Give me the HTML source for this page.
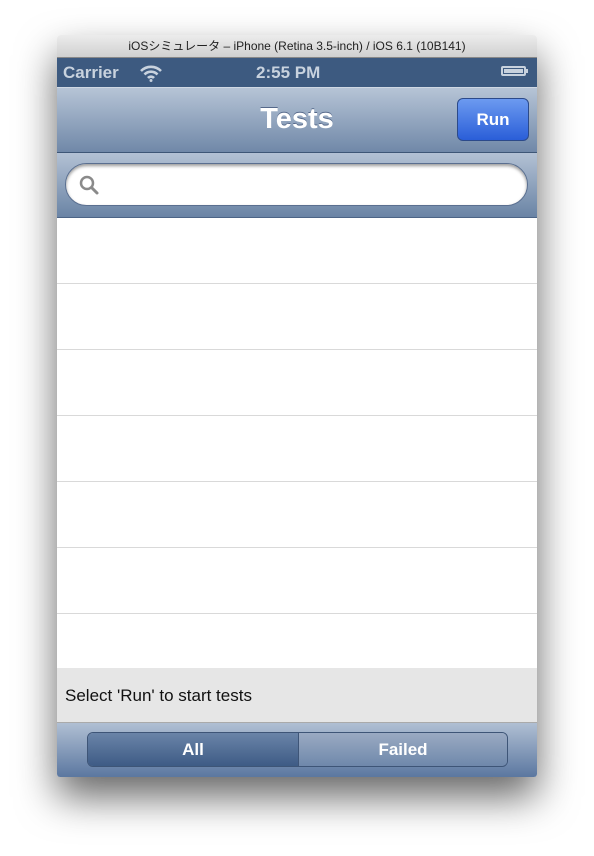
<!DOCTYPE html><html><head><style>
body{margin:0;width:594px;height:856px;background:#fff;position:relative;font-family:"Liberation Sans",sans-serif;overflow:hidden}
.win{position:absolute;left:57px;top:35px;width:480px;height:742px;box-shadow:0 20px 40px rgba(0,0,0,.6);border-radius:4px 4px 3px 3px;overflow:hidden;background:#fff}
.t{height:22px;background:linear-gradient(#ececec,#d0d0d0);font-size:12px;text-align:center;line-height:22px;color:#222;font-family:"Liberation Sans","Noto Sans CJK JP",sans-serif;border-bottom:1px solid #888}
.sb{height:29px;background:#3d5a80;color:#c8d2de;font-weight:bold;font-size:17px;position:relative}
.nav{height:64px;background:linear-gradient(#b6c4d6,#7088a8);border-top:1px solid #cfd8e4;border-bottom:1px solid #3e5676;position:relative}
.srch{height:64px;background:linear-gradient(#b3c1d4,#6a84a5);position:relative;border-bottom:1px solid #4c6486}
.row{height:65px;border-bottom:1px solid #d9d9d9}
</style></head><body>
<div class="win">
<div class="t">iOSシミュレータ – iPhone (Retina 3.5-inch) / iOS 6.1 (10B141)</div>
<div class="sb"><span style="position:absolute;left:6px;top:5px">Carrier</span>
<svg style="position:absolute;left:82px;top:6px" width="24" height="18" viewBox="0 0 24 18"><path d="M2 7a14 14 0 0 1 20 0M5.5 10.5a9 9 0 0 1 13 0M9 14a4 4 0 0 1 6 0" stroke="#c8d2de" stroke-width="2.6" fill="none"/><circle cx="12" cy="16.5" r="1.5" fill="#c8d2de"/></svg>
<span style="position:absolute;left:199px;top:5px">2:55 PM</span>
<div style="position:absolute;left:444px;top:8px;width:25px;height:10px;border:2px solid #c8d2de;border-radius:2px;box-sizing:border-box;padding:1px"><div style="background:#c8d2de;height:100%"></div></div><div style="position:absolute;left:469px;top:11px;width:2px;height:4px;background:#c8d2de"></div></div>
<div class="nav"><div style="position:absolute;left:0;right:0;top:15px;text-align:center;color:#fff;font-weight:bold;font-size:29px;text-shadow:0 -1px 0 #55688a">Tests</div>
<div style="position:absolute;left:400px;top:10px;width:72px;height:43px;border-radius:6px;background:linear-gradient(#6c9af0,#2a5ed8);border:1px solid #2c4a8a;box-sizing:border-box;color:#fff;font-weight:bold;font-size:17px;text-align:center;line-height:41px">Run</div></div>
<div class="srch"><div style="position:absolute;left:8px;top:10px;width:463px;height:43px;border-radius:22px;background:#fff;border:1px solid #5a6f90;box-sizing:border-box;box-shadow:inset 0 2px 3px #999">
<svg style="position:absolute;left:12px;top:10px" width="22" height="22" viewBox="0 0 22 22"><circle cx="9" cy="9" r="6" stroke="#8a8a8a" stroke-width="2.5" fill="none"/><path d="M13.5 13.5 19 19" stroke="#8a8a8a" stroke-width="3" stroke-linecap="round"/></svg></div></div>
<div class="row"></div><div class="row"></div><div class="row"></div><div class="row"></div><div class="row"></div><div class="row"></div>
<div style="height:54px;background:#fff"></div>
<div style="height:54px;background:#e6e6e6;border-bottom:1px solid #aaa;font-size:17px;color:#111;line-height:55px;padding-left:8px">Select 'Run' to start tests</div>
<div style="height:54px;background:linear-gradient(#b0bfd3,#5b77a0);position:relative">
<div style="position:absolute;left:30px;top:9px;width:419px;height:33px;border:1px solid #3e5577;border-radius:6px;overflow:hidden;display:flex;color:#fff;font-weight:bold;font-size:17px;line-height:33px;text-align:center">
<div style="width:210px;background:linear-gradient(#6a84a8,#3e5b85);border-right:1px solid #3e5577">All</div><div style="flex:1;background:linear-gradient(#9aaac2,#6f88ab)">Failed</div></div></div>
</div></body></html>
